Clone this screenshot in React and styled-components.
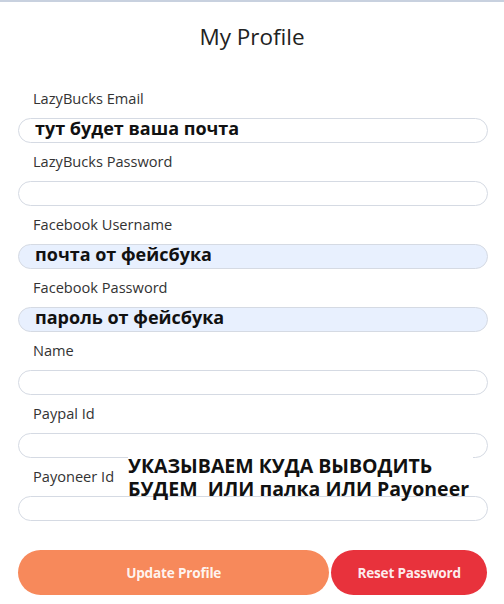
import React from "react";
import styled, { createGlobalStyle } from "styled-components";

const Global = createGlobalStyle`
  html, body { margin: 0; padding: 0; background: #fff; }
  body { font-family: "Open Sans", "Noto Sans", sans-serif; }
  * { box-sizing: border-box; }
`;

const Page = styled.div`
  width: 504px;
  min-height: 604px;
  border-top: 2px solid #c8d1df;
  background: #fff;
`;

const Title = styled.h1`
  margin: 20px 0 0;
  font-size: 22.5px;
  font-weight: 400;
  line-height: 30px;
  color: #222;
  text-align: center;
`;

const Form = styled.form`
  position: relative;
  padding: 36px 16px 0 18px;
`;

const Field = styled.div`
  display: flex;
  flex-direction: column;
  margin-bottom: 8px;
`;

const Label = styled.label`
  font-size: 14.6px;
  line-height: 20px;
  color: #333;
  padding-left: 15px;
  margin-bottom: 10px;
`;

const Input = styled.input`
  width: 100%;
  height: 25px;
  border: 1px solid #d5dae3;
  border-radius: 13px;
  background: ${(p) => (p.$filled ? "#e8f0fe" : "#fff")};
  padding: 0 16px 5px;
  font-family: "Open Sans", "Noto Sans", sans-serif;
  font-size: 18px;
  font-weight: 700;
  color: #111;
  outline: none;
`;

const Buttons = styled.div`
  display: flex;
  gap: 2px;
  margin-top: 29px;
  padding-right: 1px;
`;

const Button = styled.button`
  flex: ${(p) => p.$grow} 1 0;
  height: 45px;
  padding: 0;
  border: none;
  border-radius: 23px;
  background: ${(p) => p.$bg};
  color: rgba(255, 255, 255, 0.92);
  font-family: "Open Sans", "Noto Sans", sans-serif;
  font-size: 13.6px;
  font-weight: 700;
  letter-spacing: -0.2px;
  cursor: pointer;
`;

const Note = styled.div`
  position: absolute;
  left: 128px;
  top: 402px;
  height: 42px;
  padding-right: 4px;
  background: #fff;
  font-family: "Open Sans", "Noto Sans", sans-serif;
  font-size: 19.5px;
  font-weight: 700;
  line-height: 23px;
  color: #111;
  white-space: pre;
`;

const fields = [
  { label: "LazyBucks Email", value: "тут будет ваша почта" },
  { label: "LazyBucks Password", value: "" },
  { label: "Facebook Username", value: "почта от фейсбука", filled: true },
  { label: "Facebook Password", value: "пароль от фейсбука", filled: true },
  { label: "Name", value: "" },
  { label: "Paypal Id", value: "" },
  { label: "Payoneer Id", value: "" },
];

export default function App() {
  return (
    <Page>
      <Global />
      <Title>My Profile</Title>
      <Form onSubmit={(e) => e.preventDefault()}>
        {fields.map((f) => (
          <Field key={f.label}>
            <Label>{f.label}</Label>
            <Input readOnly defaultValue={f.value} $filled={f.filled} />
          </Field>
        ))}
        <Buttons>
          <Button type="button" $grow={2} $bg="#f7895b">
            Update Profile
          </Button>
          <Button type="button" $grow={1} $bg="#e8323c">
            Reset Password
          </Button>
        </Buttons>
        <Note>{"УКАЗЫВАЕМ КУДА ВЫВОДИТЬ\nБУДЕМ  ИЛИ палка ИЛИ Payoneer"}</Note>
      </Form>
    </Page>
  );
}
